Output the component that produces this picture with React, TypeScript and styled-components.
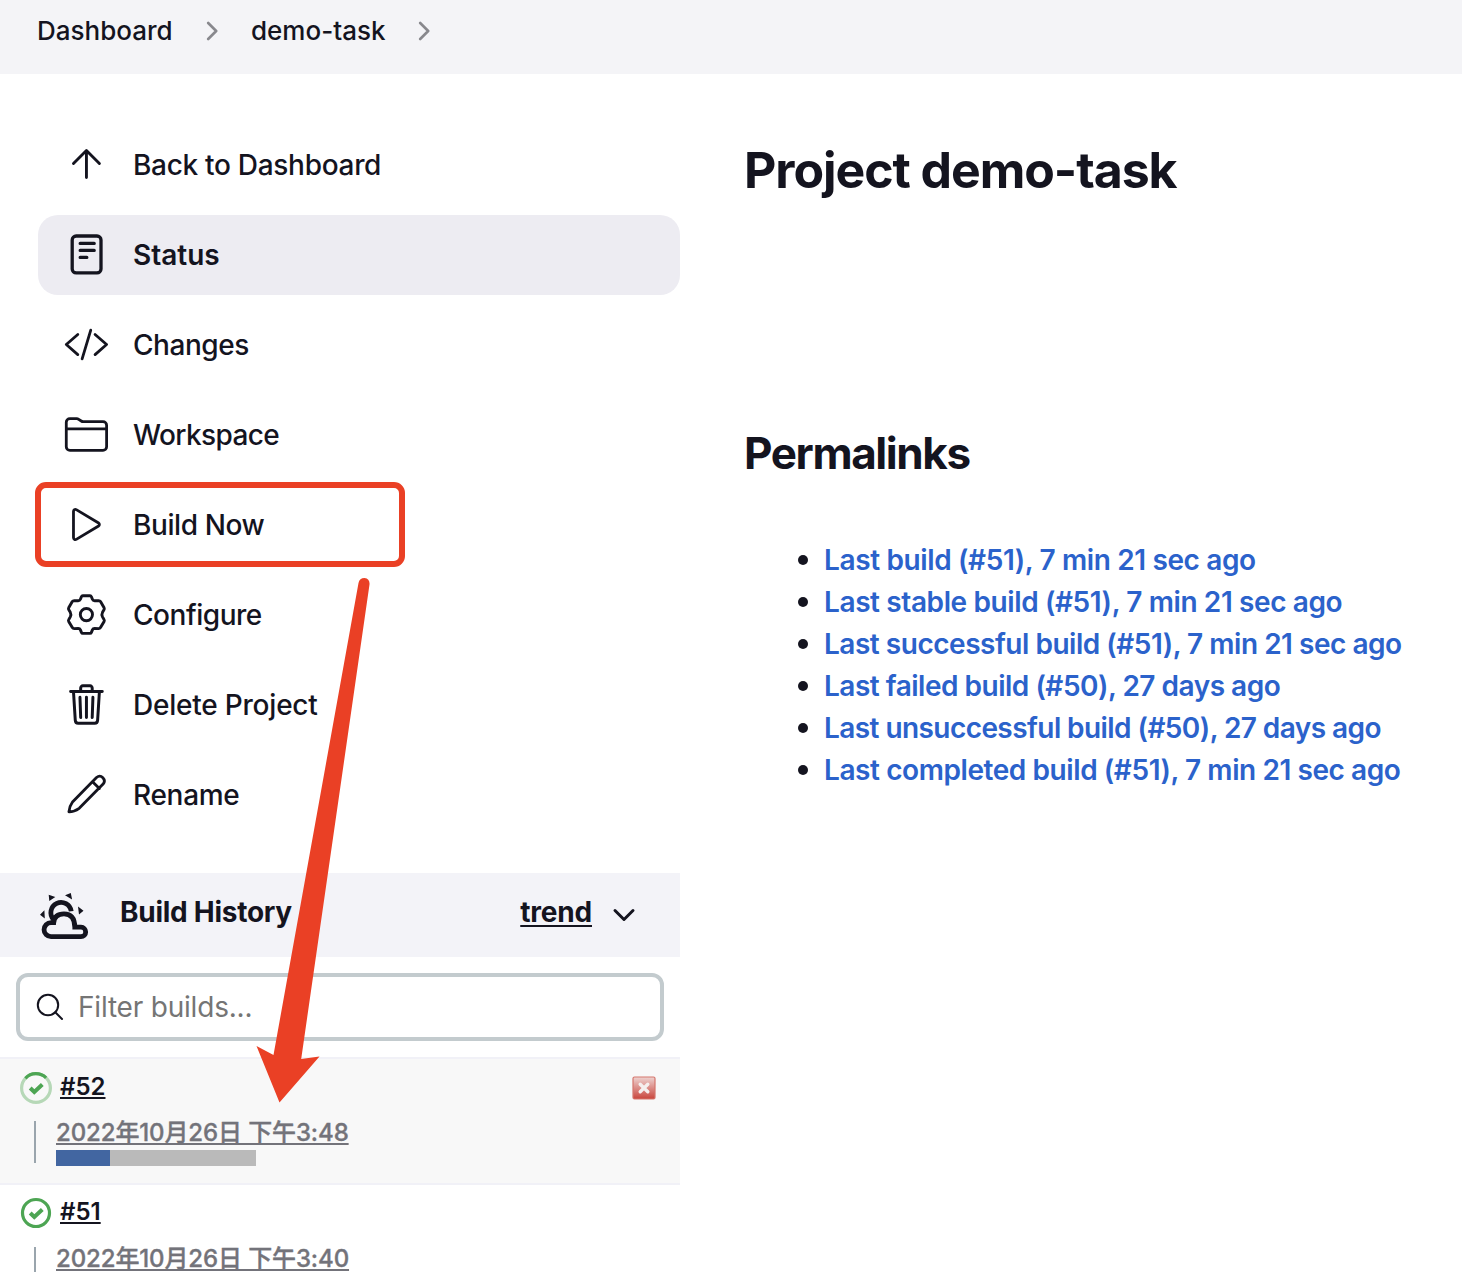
import React from "react";
import styled, { createGlobalStyle } from "styled-components";

const ink = "#14141f";
const red = "#ea4025";

const GlobalStyle = createGlobalStyle`
  * { box-sizing: border-box; }
  body {
    margin: 0;
    background: #fff;
    color: ${ink};
    font-family: Inter, "Noto Sans CJK SC", sans-serif;
  }
  a { color: inherit; }
`;

const Page = styled.div`
  position: relative;
  width: 1462px;
  height: 1288px;
  overflow: hidden;
`;

const Breadcrumbs = styled.nav`
  display: flex;
  align-items: center;
  height: 74px;
  padding: 0 0 13px 37px;
  background: #f4f4f7;
  font-size: 26px;
  font-weight: 500;
  line-height: 32px;
`;

const Crumb = styled.span<{ $width: number }>`
  width: ${(p) => p.$width}px;
  white-space: nowrap;
`;

const CrumbChevron = styled.svg`
  width: 12px;
  height: 20px;
  margin: 0 33px 0 33px;
`;

const Columns = styled.div`
  display: grid;
  grid-template-columns: 680px 1fr;
`;

const Sidebar = styled.aside`
  display: flex;
  flex-direction: column;
  height: 1198px;
  overflow: hidden;
`;

const Menu = styled.nav`
  display: flex;
  flex-direction: column;
  gap: 10px;
  padding: 51px 0 38px 38px;
`;

const MenuItem = styled.a<{ $active?: boolean }>`
  display: flex;
  align-items: center;
  gap: 23px;
  height: 80px;
  padding-left: 24px;
  border-radius: 20px;
  background: ${(p) => (p.$active ? "#edecf2" : "transparent")};
  font-size: 28px;
  font-weight: 500;
`;

const MenuIcon = styled.svg`
  width: 48px;
  height: 48px;
  fill: none;
  stroke: ${ink};
  stroke-linecap: round;
  stroke-linejoin: round;
`;

const MenuLabel = styled.span<{ $tracking: number; $heavy?: boolean }>`
  white-space: nowrap;
  letter-spacing: ${(p) => p.$tracking}px;
  font-weight: ${(p) => (p.$heavy ? 600 : 500)};
`;

const HistoryHeader = styled.div`
  display: flex;
  align-items: center;
  height: 84px;
  flex: none;
  padding: 0 44px 0 40px;
  background: #f3f3f8;
  font-size: 28px;
  font-weight: 700;
`;

const WeatherIcon = styled.svg`
  width: 50px;
  height: 50px;
  margin-right: 30px;
`;

const HistoryTitle = styled.span`
  flex: 1;
  padding-bottom: 6px;
  letter-spacing: -0.27px;
`;

const TrendLink = styled.a`
  padding-bottom: 6px;
  letter-spacing: -0.2px;
  text-decoration: underline;
  text-decoration-thickness: 2px;
  text-underline-offset: 3px;
`;

const TrendChevron = styled.svg`
  width: 24px;
  height: 16px;
  margin-left: 20px;
`;

const SearchBox = styled.label`
  display: flex;
  align-items: center;
  flex: none;
  height: 68px;
  margin: 16px;
  padding-left: 16px;
  border: 4px solid #c3cbce;
  border-radius: 12px;
`;

const SearchIcon = styled.svg`
  width: 28px;
  height: 28px;
`;

const SearchInput = styled.input`
  flex: 1;
  margin: 0 0 0 14px;
  padding: 0;
  border: 0;
  outline: 0;
  background: transparent;
  font: 400 28px Inter, sans-serif;
  letter-spacing: -0.2px;
  &::placeholder { color: #757575; opacity: 1; }
`;

const BuildRow = styled.div<{ $running?: boolean }>`
  flex: none;
  height: ${(p) => (p.$running ? 126 : 128)}px;
  border-top: 2px solid #f1f1f7;
  background: ${(p) => (p.$running ? "#f8f8f8" : "#fff")};
`;

const BuildTop = styled.div<{ $running?: boolean }>`
  display: flex;
  align-items: center;
  height: 56px;
  padding: ${(p) => (p.$running ? 2 : 0)}px 24px 0 20px;
`;

const StatusIcon = styled.svg`
  width: 32px;
  height: 32px;
  margin-right: 8px;
`;

const BuildNumber = styled.a`
  flex: 1;
  padding-bottom: 3px;
  font-size: 24px;
  font-weight: 600;
  text-decoration: underline;
  text-decoration-thickness: 2px;
  text-underline-offset: 2px;
  text-decoration-skip-ink: none;
`;

const StopIcon = styled.svg`
  width: 24px;
  height: 24px;
`;

const BuildBody = styled.div`
  margin: 6px 0 0 34px;
  height: 42px;
  border-left: 2px solid #9aa5ad;
  padding-left: 20px;
`;

const BuildDate = styled.a`
  display: block;
  height: 29px;
  color: #73737a;
  font-size: 24px;
  font-weight: 500;
  line-height: 24px;
  letter-spacing: -0.12px;
  -webkit-text-stroke: 0.35px #73737a;
  white-space: nowrap;
  text-decoration: underline;
  text-decoration-thickness: 2px;
  text-underline-offset: 2px;
  text-decoration-skip-ink: none;
`;

const Progress = styled.div`
  width: 200px;
  height: 16px;
  background: #bababa;
`;

const ProgressFill = styled.div`
  height: 100%;
  background: #4266a1;
`;

const Main = styled.main`
  padding: 66px 0 0 64px;
`;

const Title = styled.h1`
  margin: 0;
  font-size: 50px;
  font-weight: 700;
  line-height: 60px;
  letter-spacing: -1.07px;
`;

const Subtitle = styled.h2`
  margin: 226px 0 0;
  font-size: 44px;
  font-weight: 700;
  line-height: 54px;
  letter-spacing: -1.4px;
`;

const LinkList = styled.ul`
  margin: 59px 0 0;
  padding: 0 0 0 54px;
  list-style: none;
`;

const LinkItem = styled.li`
  display: flex;
  align-items: center;
  gap: 16px;
  height: 42px;
  &::before {
    content: "";
    width: 10px;
    height: 10px;
    border-radius: 50%;
    background: ${ink};
  }
`;

const Permalink = styled.a<{ $tracking: number }>`
  color: #2b62cb;
  font-size: 28px;
  font-weight: 600;
  white-space: nowrap;
  letter-spacing: ${(p) => p.$tracking}px;
`;

const Highlight = styled.div`
  position: absolute;
  left: 35px;
  top: 482px;
  width: 370px;
  height: 85px;
  border: 6px solid ${red};
  border-radius: 11px;
`;

const Pointer = styled.svg`
  position: absolute;
  left: 250px;
  top: 570px;
  width: 130px;
  height: 540px;
`;

/* Outline glyphs drawn on a 512-unit grid, fitted to the 48px icon box. */
const outline = "translate(1.4 .5) scale(.09)";

const icons: Record<string, React.ReactNode> = {
  up: (
    <g transform={outline} strokeWidth="32">
      <path d="M112 244l144-144 144 144M256 120v280" />
    </g>
  ),
  status: (
    <g strokeWidth="3.3">
      <rect x="10.2" y="5" width="28.8" height="36.9" rx="4" />
      <path d="M18.2 12.4h14M18.2 19.4h14M18.2 26.4h6.6" />
    </g>
  ),
  code: (
    <g transform={outline} strokeWidth="31">
      <path d="M160 368L32 256l128-112M352 368l128-112-128-112M304 96l-96 320" />
    </g>
  ),
  folder: (
    <g transform={outline} strokeWidth="31">
      <path d="M440 432H72a40 40 0 01-40-40V120a40 40 0 0140-40h75.89a40 40 0 0122.19 6.72l27.84 18.56a40 40 0 0022.19 6.72H440a40 40 0 0140 40v240a40 40 0 01-40 40zM32 192h448" />
    </g>
  ),
  play: (
    <g transform={outline} strokeWidth="31">
      <path d="M112 111v290c0 17.44 17 28.52 31 20.16l247.9-148.37c12.12-7.25 12.12-26.33 0-33.58L143 90.84c-14-8.36-31 2.72-31 20.16z" />
    </g>
  ),
  gear: (
    <g strokeWidth="2.9">
      <circle cx="24.4" cy="23.6" r="6.1" />
      <path d="M20.8 4.8h7.2q1 0 1.4 1l1 2.5q.6 1.5 2.2 1.5l4-.2q1.3 0 1.9 1l3.6 6.2q.5 1-.1 1.9l-1.5 2.6q-1.2 2.3 0 4.6l1.5 2.6q.6.9.1 1.9l-3.6 6.2q-.6 1-1.9 1l-4-.2q-1.6 0-2.2 1.5l-1 2.5q-.4 1-1.4 1h-7.2q-1 0-1.4-1l-1-2.5q-.6-1.5-2.2-1.5l-4 .2q-1.3 0-1.9-1l-3.6-6.2q-.5-1 .1-1.9l1.5-2.6q1.2-2.3 0-4.6l-1.5-2.6q-.6-.9-.1-1.9l3.6-6.2q.6-1 1.9-1l4 .2q1.6 0 2.2-1.5l1-2.5q.4-1 1.4-1z" />
    </g>
  ),
  trash: (
    <g transform={outline} strokeWidth="33">
      <path d="M112 112l20 320c.95 18.49 14.4 32 32 32h184c17.67 0 30.87-13.51 32-32l20-320M80 112h352M192 112V72a23.93 23.93 0 0124-24h80a23.93 23.93 0 0124 24v40M256 176v224M184 176l8 224M328 176l-8 224" />
    </g>
  ),
  pencil: (
    <g strokeWidth="2.8">
      <path d="M6.9 40.8q.2-5 3.6-9.8L34.5 6.5c4.6-3.8 10.2 2.2 6.6 6.6L17.2 37.3Q12 40.9 6.9 40.8zM30.500 10.800l6.900 6.800" />
    </g>
  ),
};

const menu = [
  { icon: "up", label: "Back to Dashboard", tracking: -0.3 },
  { icon: "status", label: "Status", tracking: 0, active: true },
  { icon: "code", label: "Changes", tracking: -0.45 },
  { icon: "folder", label: "Workspace", tracking: -0.62 },
  { icon: "play", label: "Build Now", tracking: -0.4 },
  { icon: "gear", label: "Configure", tracking: -0.46 },
  { icon: "trash", label: "Delete Project", tracking: -0.22 },
  { icon: "pencil", label: "Rename", tracking: -0.3 },
];

const permalinks = [
  { text: "Last build (#51), 7 min 21 sec ago", tracking: -0.37 },
  { text: "Last stable build (#51), 7 min 21 sec ago", tracking: -0.39 },
  { text: "Last successful build (#51), 7 min 21 sec ago", tracking: -0.48 },
  { text: "Last failed build (#50), 27 days ago", tracking: -0.49 },
  { text: "Last unsuccessful build (#50), 27 days ago", tracking: -0.57 },
  { text: "Last completed build (#51), 7 min 21 sec ago", tracking: -0.42 },
];

const builds = [
  { id: "#52", date: "2022年10月26日 下午3:48", progress: 27 },
  { id: "#51", date: "2022年10月26日 下午3:40" },
];

function Chevron() {
  return (
    <CrumbChevron viewBox="0 0 12 20" fill="none" stroke="#88888d" strokeWidth="2.6" strokeLinecap="round" strokeLinejoin="round">
      <path d="M2.2 2l8 8-8 8" />
    </CrumbChevron>
  );
}

function BuildStatus({ running }: { running: boolean }) {
  return (
    <StatusIcon viewBox="0 0 32 32" fill="none">
      <circle cx="16" cy="16" r={running ? 14.4 : 13.5} stroke={running ? "#b6d8b7" : "#4da553"} strokeWidth="3.2" />
      {running && <path d="M5.4 6.3a14.4 14.4 0 0120.7-.4" stroke="#4da553" strokeWidth="3.2" />}
      <path d="M10.2 16l4.1 4 8-7.5" stroke="#4da553" strokeWidth="4" />
    </StatusIcon>
  );
}

export default function App() {
  return (
    <>
      <GlobalStyle />
      <Page>
        <Breadcrumbs>
          <Crumb $width={136}>Dashboard</Crumb>
          <Chevron />
          <Crumb $width={134}>demo-task</Crumb>
          <Chevron />
        </Breadcrumbs>
        <Columns>
          <Sidebar>
            <Menu>
              {menu.map((m) => (
                <MenuItem key={m.label} $active={m.active}>
                  <MenuIcon viewBox="0 0 48 48">{icons[m.icon]}</MenuIcon>
                  <MenuLabel $tracking={m.tracking} $heavy={m.active}>{m.label}</MenuLabel>
                </MenuItem>
              ))}
            </Menu>
            <HistoryHeader>
              <WeatherIcon viewBox="0 0 50 50" fill="none" stroke={ink} strokeWidth="4.8">
                <path d="M13.6 29.500a10.200 10.200 0 1117.600-8.200" />
                <path d="M11 32.7h2.700q.8-8.800 10.300-8.800 10.700 0 10.800 13.300h6.200a4.700 4.700 0 010 9.400H11a6.900 6.900 0 010-13.900z" />
                <g fill={ink} stroke="none">
                  <path d="M8.7 4.8l6.600 2.200-6 3.900zM25 5.300L30.800 3l1.300 6.400zM38 16.500l5.500 4.200-4.500 3.800zM0 24.700l4.400-4.400.4 8.200z" />
                </g>
              </WeatherIcon>
              <HistoryTitle>Build History</HistoryTitle>
              <TrendLink>trend</TrendLink>
              <TrendChevron viewBox="0 0 24 16" fill="none" stroke={ink} strokeWidth="3" strokeLinecap="round" strokeLinejoin="round">
                <path d="M3 3.5l9 9 9-9" />
              </TrendChevron>
            </HistoryHeader>
            <SearchBox>
              <SearchIcon viewBox="0 0 28 28" fill="none" stroke={ink} strokeWidth="2" strokeLinecap="round">
                <circle cx="12" cy="12" r="10.2" />
                <path d="M19.3 19.3l6.7 6.7" />
              </SearchIcon>
              <SearchInput placeholder="Filter builds..." />
            </SearchBox>
            {builds.map((b) => {
              const running = b.progress !== undefined;
              return (
                <BuildRow key={b.id} $running={running}>
                  <BuildTop $running={running}>
                    <BuildStatus running={running} />
                    <BuildNumber>{b.id}</BuildNumber>
                    {running && (
                      <StopIcon viewBox="0 0 24 24">
                        <defs>
                          <linearGradient id="stop" x1="0" y1="0" x2="0" y2="1">
                            <stop offset="0" stopColor="#eed3d1" />
                            <stop offset="1" stopColor="#c9453c" />
                          </linearGradient>
                        </defs>
                        <rect x="1" y="1" width="22" height="22" rx="1.5" fill="url(#stop)" stroke="#d5766d" strokeWidth="1.2" />
                        <path d="M8.2 8.2l7.6 7.6M15.8 8.2l-7.6 7.6" stroke="#f5efee" strokeWidth="3.4" strokeLinecap="round" />
                      </StopIcon>
                    )}
                  </BuildTop>
                  <BuildBody>
                    <BuildDate>{b.date}</BuildDate>
                    {running && (
                      <Progress>
                        <ProgressFill style={{ width: `${b.progress}%` }} />
                      </Progress>
                    )}
                  </BuildBody>
                </BuildRow>
              );
            })}
          </Sidebar>
          <Main>
            <Title>Project demo-task</Title>
            <Subtitle>Permalinks</Subtitle>
            <LinkList>
              {permalinks.map((l) => (
                <LinkItem key={l.text}>
                  <Permalink $tracking={l.tracking}>{l.text}</Permalink>
                </LinkItem>
              ))}
            </LinkList>
          </Main>
        </Columns>
        <Highlight />
        <Pointer viewBox="250 570 130 540" fill={red}>
          <path d="M358.500 583q1-5 6-5 5.500.8 5 6.500L301.200 1059l18.300-2.500-40 46-23-56.500 17 9z" />
        </Pointer>
      </Page>
    </>
  );
}
